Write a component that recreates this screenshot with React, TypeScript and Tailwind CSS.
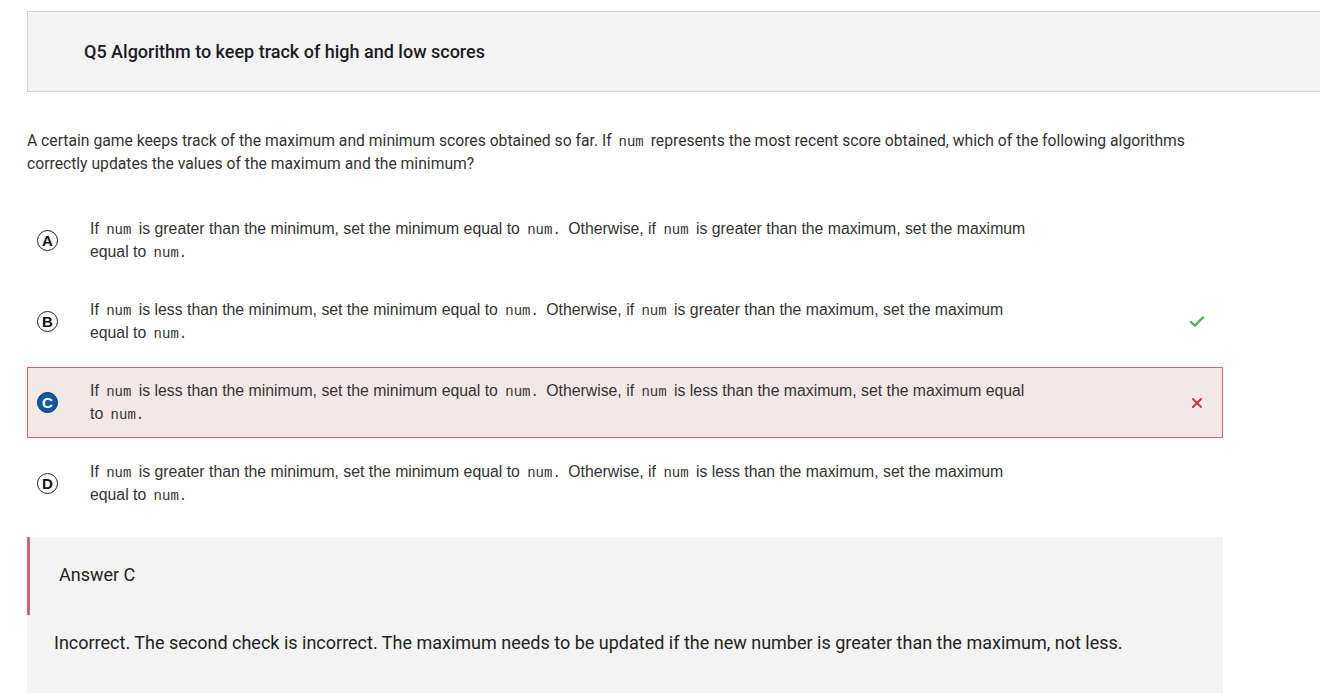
import { Check, X } from 'lucide-react';

type Part = string | { code: string };

const options: { letter: string; parts: Part[]; state?: 'correct' | 'wrong' }[] = [
  {
    letter: 'A',
    parts: [
      'If ', { code: 'num' }, ' is greater than the minimum, set the minimum equal to ', { code: 'num.' },
      ' Otherwise, if ', { code: 'num' }, ' is greater than the maximum, set the maximum equal to ', { code: 'num.' },
    ],
  },
  {
    letter: 'B',
    state: 'correct',
    parts: [
      'If ', { code: 'num' }, ' is less than the minimum, set the minimum equal to ', { code: 'num.' },
      ' Otherwise, if ', { code: 'num' }, ' is greater than the maximum, set the maximum equal to ', { code: 'num.' },
    ],
  },
  {
    letter: 'C',
    state: 'wrong',
    parts: [
      'If ', { code: 'num' }, ' is less than the minimum, set the minimum equal to ', { code: 'num.' },
      ' Otherwise, if ', { code: 'num' }, ' is less than the maximum, set the maximum equal to ', { code: 'num.' },
    ],
  },
  {
    letter: 'D',
    parts: [
      'If ', { code: 'num' }, ' is greater than the minimum, set the minimum equal to ', { code: 'num.' },
      ' Otherwise, if ', { code: 'num' }, ' is less than the maximum, set the maximum equal to ', { code: 'num.' },
    ],
  },
];

function Code({ children }: { children: string }) {
  return <code className="mx-[3px] text-[14px] font-['Liberation_Mono',monospace]">{children}</code>;
}

function Option({ letter, parts, state }: (typeof options)[number]) {
  const selected = state === 'wrong';
  return (
    <div
      className={`flex items-center h-[71px] pl-[9px] pr-[15px] border ${
        selected ? 'bg-[#f3e8e8] border-[#e35d6a]' : 'border-transparent'
      }`}
    >
      <div
        className={`flex shrink-0 items-center justify-center w-[21px] h-[21px] rounded-full border-[1.5px] text-[15px] font-bold leading-none font-['Liberation_Sans',Arial,sans-serif] ${
          selected ? 'bg-[#0c5aa6] border-[#0b2f55] text-white' : 'border-[#222] text-[#111]'
        }`}
      >
        {letter}
      </div>
      <p className="ml-[32px] w-[945px] text-[15.8px] leading-[22px] text-[#333] font-['Liberation_Sans',Arial,sans-serif]">
        {parts.map((p, i) => (typeof p === 'string' ? <span key={i}>{p}</span> : <Code key={i}>{p.code}</Code>))}
      </p>
      <div className="ml-auto w-[20px] flex justify-center">
        {state === 'correct' && <Check size={18} strokeWidth={3.2} className="text-[#4caf50]" />}
        {state === 'wrong' && <X size={16} strokeWidth={3} className="text-[#cc2e48]" />}
      </div>
    </div>
  );
}

export default function App() {
  return (
    <div className="w-[1320px] min-h-screen overflow-hidden bg-white pt-[11px] font-['Roboto',sans-serif]">
      <div className="ml-[27px] w-[1320px] h-[81px] flex items-center pl-[56px] bg-[#f3f3f3] border border-[#d4d4d4]">
        <h1 className="text-[18px] font-medium text-[#1b1b24]">Q5 Algorithm to keep track of high and low scores</h1>
      </div>

      <div className="ml-[27px] w-[1196px]">
        <p className="mt-[38px] text-[15.7px] leading-[22px] text-[#333]">
          A certain game keeps track of the maximum and minimum scores obtained so far. If <Code>num</Code> represents the most
          recent score obtained, which of the following algorithms correctly updates the values of the maximum and the minimum?
        </p>

        <div className="mt-[30px] flex flex-col gap-[10px]">
          {options.map((o) => (
            <Option key={o.letter} {...o} />
          ))}
        </div>

        <div className="mt-[18px] bg-[#f3f3f3] pb-[40px]">
          <div className="h-[78px] flex items-center pl-[29px] pb-[3px] border-l-[3px] border-[#e35d6a]">
            <span className="text-[18px] text-[#222]">Answer C</span>
          </div>
          <p className="mt-[15px] pl-[27px] text-[18px] leading-[26px] text-[#222]">
            Incorrect. The second check is incorrect. The maximum needs to be updated if the new number is greater than the
            maximum, not less.
          </p>
        </div>
      </div>
    </div>
  );
}
